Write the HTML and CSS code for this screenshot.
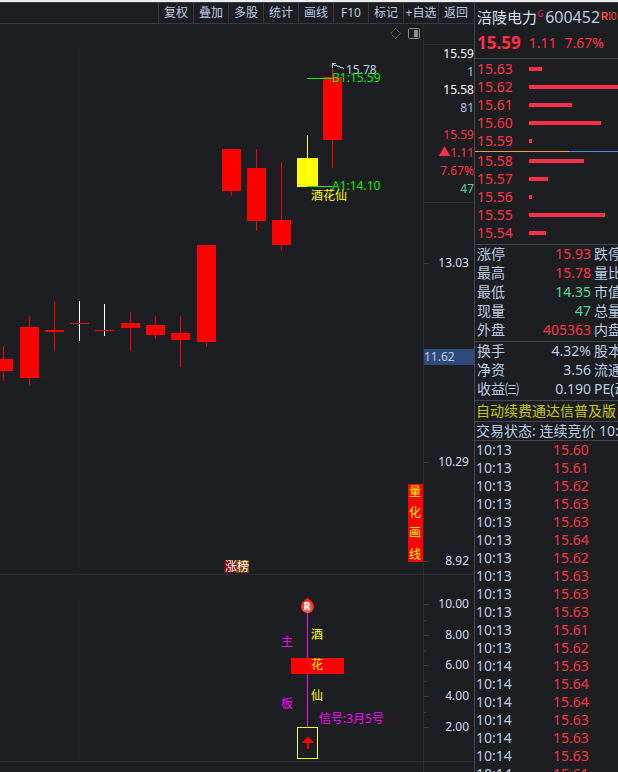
FILE: index.html
```html
<!DOCTYPE html>
<html lang="zh-Hans">
<head>
  <meta charset="UTF-8">
  <meta name="viewport" content="width=device-width, initial-scale=1.0">
  <title>涪陵电力 600452</title>
  <link rel="stylesheet" href="styles.css">
</head>
<body>
  <main class="terminal">
    <section class="left">
      <nav class="toolbar">
        <button type="button">复权</button>
        <button type="button">叠加</button>
        <button type="button">多股</button>
        <button type="button">统计</button>
        <button type="button">画线</button>
        <button type="button">F10</button>
        <button type="button">标记</button>
        <button type="button">+自选</button>
        <button type="button">返回</button>
      </nav>
      <div class="row price-row">
        <svg class="chart" viewBox="0 24 423 550" preserveAspectRatio="xMaxYMin meet" shape-rendering="crispEdges">
          <path class="dots" d="M79.5 46V574"/>
          <g id="candles"></g>
          <path class="green-line" d="M307 78.5H332M307 186.5H332"/>
          <path class="pointer" d="M344 68.5L333 64.5M336 63.5H332.5V68"/>
          <text class="t-light" x="346" y="74">15.78</text>
          <text class="t-green" x="332" y="82">B1:15.59</text>
          <text class="t-green" x="332" y="190">A1:14.10</text>
          <text class="t-yellow" x="311" y="200">酒花仙</text>
          <g class="tool-icon" shape-rendering="auto">
            <path stroke-dasharray="1 1" d="M395.500 28.500L400.500 33.500L395.500 38.500L390.500 33.500Z"/>
            <rect x="408.500" y="28.500" width="11" height="10" rx="1"/>
            <rect class="fill" x="414" y="30" width="4" height="7"/>
          </g>
          <rect class="red" x="408" y="484" width="15" height="78"/>
          <text class="t-yellow" x="409" y="496">量</text>
          <text class="t-yellow" x="409" y="517">化</text>
          <text class="t-yellow" x="409" y="537">画</text>
          <text class="t-yellow" x="409" y="559">线</text>
          <rect fill="#800000" x="224" y="560" width="12" height="13"/>
          <rect fill="#804000" x="236" y="560" width="13" height="13"/>
          <text class="t-white" x="225" y="571">涨榜</text>
        </svg>
        <div class="axis">
          <ul class="quote">
            <li class="white">15.59</li>
            <li class="blue">1</li>
            <li class="white">15.58</li>
            <li class="blue">81</li>
            <li class="up split">15.59</li>
            <li class="up">▲1.11</li>
            <li class="up">7.67%</li>
            <li class="down">47</li>
          </ul>
          <svg class="scale" viewBox="424 203 50 371" shape-rendering="crispEdges">
            <path class="tick" d="M424 263.500H429M424 462.500H429M424 561.500H429"/>
            <rect fill="#2f4b7c" x="424" y="349" width="50" height="16"/>
            <text x="469" y="267">13.03</text>
            <text class="cursor" x="424" y="361">11.62</text>
            <text x="469" y="466">10.29</text>
            <text x="469" y="565">8.92</text>
          </svg>
        </div>
      </div>
      <div class="row signal-row">
        <svg class="chart signal" viewBox="0 575 423 186" preserveAspectRatio="xMaxYMin meet" shape-rendering="crispEdges">
          <defs>
            <radialGradient id="drop" cx="50%" cy="65%" r="60%">
              <stop offset="0" stop-color="#ffa090"/>
              <stop offset="1" stop-color="#e80000"/>
            </radialGradient>
          </defs>
          <path class="dots" d="M79.5 598V761"/>
          <path class="magenta-line" d="M307.5 612V727"/>
          <path shape-rendering="auto" fill="url(#drop)" d="M307.500 597C309 600 314 601.500 314 606.500C314 610.500 311 613 307.500 613S301 610.500 301 606.500C301 601.500 306 600 307.500 597Z"/>
          <text class="badge" x="307" y="610">R</text>
          <rect class="red" x="291" y="658" width="53" height="16"/>
          <text class="t-yellow" x="311" y="639">酒</text>
          <text class="t-yellow" x="311" y="669">花</text>
          <text class="t-yellow" x="311" y="700">仙</text>
          <text class="t-magenta" x="281" y="646">主</text>
          <text class="t-magenta" x="281" y="708">板</text>
          <text class="t-magenta" x="319" y="723">信号:3月5号</text>
          <rect class="box" x="297.500" y="727.500" width="20" height="31"/>
          <path class="red" d="M307 737H309L313 742V743H309V749H307V743H303V742Z"/>
        </svg>
        <div class="axis">
          <svg class="scale" viewBox="424 575 50 186" shape-rendering="crispEdges">
            <path class="tick" d="M424 604.500H429M424 635.500H429M424 665.500H429M424 696.500H429M424 727.500H429M424 620.500H426M424 650.500H426M424 681.500H426M424 712.500H426"/>
            <text x="469" y="608">10.00</text>
            <text x="469" y="639">8.00</text>
            <text x="469" y="669">6.00</text>
            <text x="469" y="700">4.00</text>
            <text x="469" y="731">2.00</text>
          </svg>
        </div>
      </div>
      <div class="row foot-row">
        <div></div>
        <div class="axis"></div>
      </div>
    </section>

    <aside class="side">
      <header class="stock">
        <h1>涪陵电力<sup>G</sup></h1>
        <span class="code">600452</span>
        <span class="flag"><b>R</b>I0</span>
      </header>
      <div class="last up"><strong>15.59</strong><span>1.11</span><span>7.67%</span></div>
      <table class="book" id="asks"></table>
      <div class="ratio"></div>
      <table class="book" id="bids"></table>
      <table class="info">
        <tr><th>涨停</th><td class="up">15.93</td><th>跌停</th></tr>
        <tr><th>最高</th><td class="up">15.78</td><th>量比</th></tr>
        <tr><th>最低</th><td class="down">14.35</td><th>市值</th></tr>
        <tr><th>现量</th><td class="down">47</td><th>总量</th></tr>
        <tr><th>外盘</th><td class="up">405363</td><th>内盘</th></tr>
      </table>
      <table class="info">
        <tr><th>换手</th><td>4.32%</td><th>股本</th></tr>
        <tr><th>净资</th><td>3.56</td><th>流通</th></tr>
        <tr><th>收益㈢</th><td>0.190</td><th>PE(动)</th></tr>
      </table>
      <p class="notice">自动续费通达信普及版</p>
      <p class="status">交易状态: 连续竞价 10:14</p>
      <table class="ticks" id="ticks"></table>
    </aside>
  </main>
  <script>
    // x, width, open/close box top and bottom, wick x, wick top and bottom, wick colour
    const candles = [
      [0, 13, 359, 371, 3, 346, 381, "red"],
      [20, 19, 327, 378, 29, 316, 385, "red"],
      [45, 19, 330, 332, 54, 301, 351, "red"],
      [70, 19, 323, 324, 79, 301, 341, "white"],
      [95, 19, 330, 331, 104, 304, 336, "white"],
      [121, 19, 323, 328, 130, 312, 351, "red"],
      [146, 19, 325, 335, 155, 316, 339, "red"],
      [171, 19, 333, 340, 180, 316, 367, "red"],
      [197, 19, 245, 342, 206, 245, 347, "red"],
      [222, 19, 149, 191, 231, 149, 196, "red"],
      [247, 19, 168, 221, 256, 149, 231, "red"],
      [272, 19, 220, 245, 281, 162, 251, "red"],
      [297, 21, 158, 187, 307, 135, 187, "yellow"],
      [323, 19, 77, 140, 332, 66, 168, "red"]
    ];
    document.getElementById("candles").innerHTML = candles.map(([x, w, top, bottom, wx, wTop, wBottom, color]) => `
      <rect class="${color}" x="${wx}" y="${wTop}" width="1" height="${wBottom - wTop}"/>
      <rect class="${color === "white" ? "red" : color}" x="${x}" y="${top}" width="${w}" height="${bottom - top}"/>
    `).join("");

    const asks = [["15.63", 15], ["15.62", 100], ["15.61", 48], ["15.60", 81], ["15.59", 3]];
    const bids = [["15.58", 62], ["15.57", 21], ["15.56", 3], ["15.55", 85], ["15.54", 19]];
    function renderBook(id, rows) {
      document.getElementById(id).innerHTML = rows.map(([price, size]) => `
        <tr><td class="up">${price}</td><td><div class="bar" style="width:${size}%"></div></td></tr>
      `).join("");
    }
    renderBook("asks", asks);
    renderBook("bids", bids);

    const ticks = [
      ["10:13", [60, 61, 62, 63, 63, 64, 62, 63, 63, 63, 61, 62]],
      ["10:14", [63, 64, 64, 63, 63, 63, 61]]
    ];
    document.getElementById("ticks").innerHTML = ticks.map(([time, cents]) =>
      cents.map(c => `<tr><td>${time}</td><td class="up">15.${c}</td></tr>`).join("")
    ).join("");
  </script>
</body>
</html>
```
FILE: styles.css
```css
* {
  box-sizing: border-box;
}
body {
  margin: 0;
  background-color: #1d1e21;
  color: #b9cce4;
  font-family: "Noto Sans", "Noto Sans CJK SC", sans-serif;
  font-size: 14px;
  line-height: 18px;
}
.terminal {
  display: flex;
  height: 100vh;
  overflow: hidden;
  border-top: 2px solid #eceded;
}
.left {
  flex: 1;
  min-width: 0;
  display: flex;
  flex-direction: column;
  border-top: 1px solid #3c3c3e;
}
.toolbar {
  flex: none;
  display: flex;
  justify-content: flex-end;
  height: 21px;
  padding-right: 1px;
  border-bottom: 1px solid #39393c;
}
.toolbar button {
  width: 35px;
  padding: 0;
  border: 0;
  border-left: 1px solid #39393c;
  background: none;
  color: #b9cce4;
  font-family: inherit;
  font-size: 12px;
  line-height: 20px;
  white-space: nowrap;
}
.row {
  flex: none;
  display: grid;
  grid-template-columns: 1fr 51px;
  border-bottom: 1px solid #2b2b33;
}
.foot-row {
  flex: 1;
  border-bottom: 0;
}
.chart {
  display: block;
  width: 100%;
  height: 550px;
}
.signal {
  height: 186px;
}
.axis {
  border-left: 1px solid #2b2b33;
}
.quote {
  list-style: none;
  margin: 20px 0 0;
  padding: 0 0 4px;
  border-top: 1px solid #2b2b33;
  border-bottom: 1px solid #2b2b33;
  font-size: 12px;
  text-align: right;
}
.quote li {
  height: 18px;
}
.quote .split {
  margin-top: 9px;
}
.scale {
  display: block;
  width: 50px;
}

/* chart drawing */
svg text {
  font-size: 12px;
}
.scale text {
  fill: #d3def0;
  text-anchor: end;
}
.scale .cursor {
  fill: #b9cce4;
  text-anchor: start;
}
.tick {
  stroke: #3a3a42;
}
.dots {
  stroke: #2b2c30;
  stroke-dasharray: 1 3;
}
.red {
  fill: #ff0000;
}
rect.white {
  fill: #ffffff;
}
.yellow {
  fill: #ffff00;
}
.green-line {
  stroke: #00ff00;
}
.magenta-line {
  stroke: #ff00ff;
}
.pointer {
  fill: none;
  stroke: #b9cce4;
}
.tool-icon {
  fill: none;
  stroke: #8c8c8c;
}
.tool-icon .fill {
  fill: #8c8c8c;
  stroke: none;
}
.box {
  fill: none;
  stroke: #ffff00;
}
.t-light {
  fill: #b9cce4;
}
.t-green {
  fill: #00f000;
}
.t-yellow {
  fill: #ffff00;
}
.t-white {
  fill: #ffffff;
}
.t-magenta {
  fill: #ff00ff;
}
svg .badge {
  fill: #ffffff;
  font-size: 10px;
  font-weight: bold;
  text-anchor: middle;
}

.up {
  color: #ff2e47;
}
.down {
  color: #4bd6a0;
}
.white {
  color: #ffffff;
}
.blue {
  color: #9fc4ee;
}

/* quote panel */
.side {
  width: 144px;
  overflow: hidden;
  border-top: 1px solid #3c3c3e;
  border-left: 1px solid #454547;
  white-space: nowrap;
}
.stock {
  display: flex;
  align-items: center;
  height: 28px;
  padding-left: 2px;
}
.stock h1 {
  margin: 0;
  color: #d3e2f5;
  font-size: 15px;
  font-weight: normal;
}
.stock sup {
  color: #ff0090;
  font-size: 9px;
  font-style: italic;
  line-height: 1;
}
.code {
  margin-left: 2px;
  font-size: 16px;
}
.flag {
  margin-left: 1px;
  color: #ff5040;
  font-family: "Liberation Sans", sans-serif;
  font-size: 10px;
}
.last {
  display: flex;
  align-items: center;
  gap: 8px;
  height: 28px;
  padding: 0 0 4px 2px;
  border-bottom: 1px solid #454547;
}
.last strong {
  font-size: 17px;
}
table {
  width: 100%;
  border-collapse: collapse;
  table-layout: fixed;
}
th, td {
  padding: 0;
  font-weight: normal;
  text-align: left;
}
.book {
  margin-top: 1px;
}
.book tr {
  height: 18px;
}
.book td:first-child {
  width: 54px;
  padding-left: 2px;
}
.bar {
  height: 4px;
  background-color: #ff2e47;
}
.ratio {
  height: 1px;
  margin-top: 1px;
  background: linear-gradient(to right, #f0a040 66%, #4a90e0 66%);
}
#bids {
  margin: 0 0 2px;
}
.info {
  border-top: 1px solid #454547;
}
.info tr {
  height: 19px;
}
.info + .info {
  margin-top: 1px;
}
.info th:first-child {
  width: 50px;
  padding-left: 2px;
}
.info td {
  width: 66px;
  text-align: right;
}
.info th:last-child {
  padding-left: 3px;
}
.notice, .status {
  margin: 0;
  padding-left: 1px;
  border-top: 1px solid #454547;
}
.notice {
  height: 21px;
  margin-top: 2px;
  line-height: 20px;
  color: #c8c800;
}
.status {
  height: 19px;
}
.ticks {
  border-top: 1px solid #454547;
}
.ticks tr {
  height: 18px;
}
.ticks td:first-child {
  width: 78px;
  padding-left: 1px;
}
```
